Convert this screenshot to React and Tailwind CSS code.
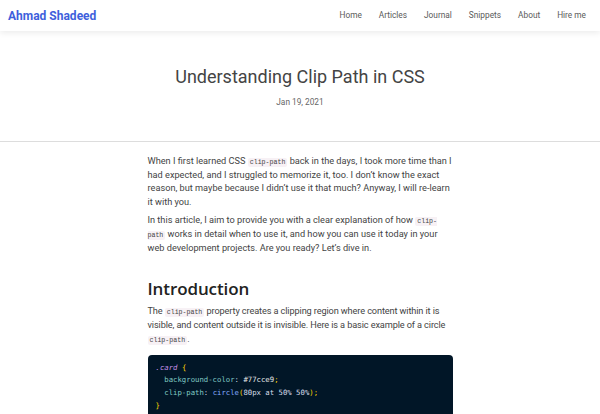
export default function App() {
  const sans = { fontFamily: "Roboto, 'Noto Sans', sans-serif" };
  const Code = ({ children }) => (
    <code className="rounded-[2px] bg-[#f7f1f5] px-[2px] py-[1px] text-[6.6px] leading-[8px] tracking-normal text-[#444] font-['Liberation_Mono',monospace]">
      {children}
    </code>
  );
  return (
    <div className="h-[414px] w-full overflow-hidden bg-white text-[#333]" style={sans}>
      <header className="relative z-10 flex h-[31px] items-center justify-between bg-white pl-[8px] pr-[14px] shadow-[0_2px_6px_rgba(0,0,0,0.08)]">
        <a className="text-[12px] font-bold text-[#3e5fdc]">Ahmad Shadeed</a>
        <nav className="flex gap-[17px] text-[8.3px] text-[#5a5a5a]">
          <span>Home</span>
          <span>Articles</span>
          <span>Journal</span>
          <span>Snippets</span>
          <span>About</span>
          <span>Hire me</span>
        </nav>
      </header>
      <div className="flex flex-col items-center border-b border-[#ddd] pt-[33px] pb-[33px]">
        <h1 className="text-[18px] font-normal leading-[26px] text-[#444]">Understanding Clip Path in CSS</h1>
        <p className="mt-[6px] text-[8.3px] leading-[12px] text-[#666]">Jan 19, 2021</p>
      </div>
      <main className="mx-auto w-[305px] pt-[12px] text-[9.2px] leading-[13.7px] text-[#444]">
        <p>
          When I first learned CSS <Code>clip-path</Code> back in the days, I took more time than I had expected, and I struggled to memorize it, too. I don’t know the exact reason, but maybe because I didn’t use it that much? Anyway, I will re-learn it with you.
        </p>
        <p className="mt-[4.5px]">
          In this article, I aim to provide you with a clear explanation of how <Code>clip-path</Code> works in detail when to use it, and how you can use it today in your web development projects. Are you ready? Let’s dive in.
        </p>
        <h2 className="mt-[24px] text-[17px] font-semibold leading-[22px] text-[#222] font-['Open_Sans',sans-serif] tracking-[-0.1px]">Introduction</h2>
        <p className="mt-[4px] tracking-[-0.12px]">
          The <Code>clip-path</Code> property creates a clipping region where content within it is visible, and content outside it is invisible. Here is a basic example of a circle <Code>clip-path</Code>.
        </p>
        <pre className="mt-[9px] rounded-[4px] bg-[#011627] px-[8px] pt-[7px] pb-[10px] text-[7.3px] leading-[12.7px] font-['DejaVu_Sans_Mono',monospace] text-[#d6deeb]">
          <span className="italic text-[#c792ea]">.card</span> <span className="text-[#ffd700]">{"{"}</span>{"\n"}
          {"  "}<span className="text-[#80cbc4]">background-color</span><span className="text-[#d6deeb]">:</span> <span className="text-[#e8e8e8]">#77cce9</span><span className="text-[#ffd700]">;</span>{"\n"}
          {"  "}<span className="text-[#80cbc4]">clip-path</span>: <span className="text-[#82aaff]">circle</span><span className="text-[#ffd700]">(</span>80px at 50% 50%<span className="text-[#ffd700]">);</span>{"\n"}
          <span className="text-[#ffd700]">{"}"}</span>
        </pre>
      </main>
    </div>
  );
}
